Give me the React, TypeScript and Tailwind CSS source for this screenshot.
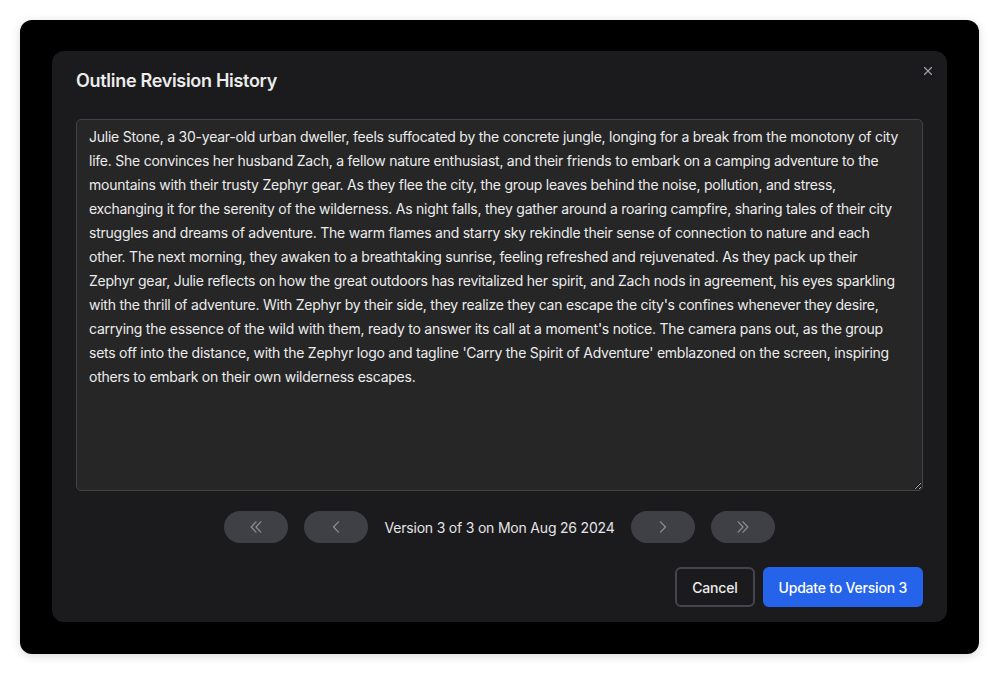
import { X } from 'lucide-react'

const OUTLINE =
  "Julie Stone, a 30-year-old urban dweller, feels suffocated by the concrete jungle, longing for a break from the monotony of city life. She convinces her husband Zach, a fellow nature enthusiast, and their friends to embark on a camping adventure to the mountains with their trusty Zephyr gear. As they flee the city, the group leaves behind the noise, pollution, and stress, exchanging it for the serenity of the wilderness. As night falls, they gather around a roaring campfire, sharing tales of their city struggles and dreams of adventure. The warm flames and starry sky rekindle their sense of connection to nature and each other. The next morning, they awaken to a breathtaking sunrise, feeling refreshed and rejuvenated. As they pack up their Zephyr gear, Julie reflects on how the great outdoors has revitalized her spirit, and Zach nods in agreement, his eyes sparkling with the thrill of adventure. With Zephyr by their side, they realize they can escape the city's confines whenever they desire, carrying the essence of the wild with them, ready to answer its call at a moment's notice. The camera pans out, as the group sets off into the distance, with the Zephyr logo and tagline 'Carry the Spirit of Adventure' emblazoned on the screen, inspiring others to embark on their own wilderness escapes."

// thin chevrons, pointing left; flipped for the right-hand buttons
function Chevron({ double, flip }: { double?: boolean; flip?: boolean }) {
  return (
    <svg width="12" height="12" viewBox="0 0 12 12" fill="none" stroke="currentColor" strokeWidth="1.2" strokeLinecap="round" strokeLinejoin="round" className={flip ? 'scale-x-[-1]' : ''}>
      {double ? (
        <>
          <path d="M6 0.8 1.2 6 6 11.2" />
          <path d="M10.8 0.8 6 6 10.8 11.2" />
        </>
      ) : (
        <path d="M8.5 0.8 3.5 6 8.5 11.2" />
      )}
    </svg>
  )
}

function PagerButton({ children }: { children: React.ReactNode }) {
  return (
    <button type="button" className="flex h-8 w-16 items-center justify-center rounded-full bg-[#3f3f46] text-[#8e8e97]">
      {children}
    </button>
  )
}

export default function App() {
  return (
    <div className="min-h-screen bg-white p-5" style={{ fontFamily: 'Inter, "Noto Sans", sans-serif' }}>
      <div className="h-[634px] rounded-xl bg-black px-8 pt-[31px] shadow-[0_2px_10px_rgba(0,0,0,0.15)]">
        <div className="relative h-[571px] rounded-xl bg-[#1b1b1d] px-6 pt-[19px]">
          <button type="button" className="absolute right-[12px] top-[13px] text-[#a1a1aa]">
            <X size={14} strokeWidth={2} />
          </button>
          <h2 className="text-[18px] font-semibold leading-[22px] tracking-[-0.3px] text-[#ececec]">Outline Revision History</h2>

          <textarea
            readOnly
            defaultValue={OUTLINE}
            className="mt-[27px] block h-[372px] w-full resize-y rounded-[5px] border border-[#434343] bg-[#262627] pl-3 pr-4 pt-[5px] text-[14px] leading-6 tracking-[-0.24px] text-[#ececec] outline-none"
          />

          <div className="mt-5 flex items-center justify-center gap-4">
            <PagerButton><Chevron double /></PagerButton>
            <PagerButton><Chevron /></PagerButton>
            <span className="text-[14px] tracking-[-0.2px] text-[#e4e4e7]">Version 3 of 3 on Mon Aug 26 2024</span>
            <PagerButton><Chevron flip /></PagerButton>
            <PagerButton><Chevron double flip /></PagerButton>
          </div>

          <div className="mt-6 flex justify-end gap-2">
            <button type="button" className="h-10 rounded-md border-2 border-[#45454d] px-[15px] text-[14px] font-medium tracking-[-0.2px] text-[#ececec]">
              Cancel
            </button>
            <button type="button" className="h-10 rounded-md bg-[#2563eb] px-4 text-[14px] font-medium tracking-[-0.2px] text-white">
              Update to Version 3
            </button>
          </div>
        </div>
      </div>
    </div>
  )
}
